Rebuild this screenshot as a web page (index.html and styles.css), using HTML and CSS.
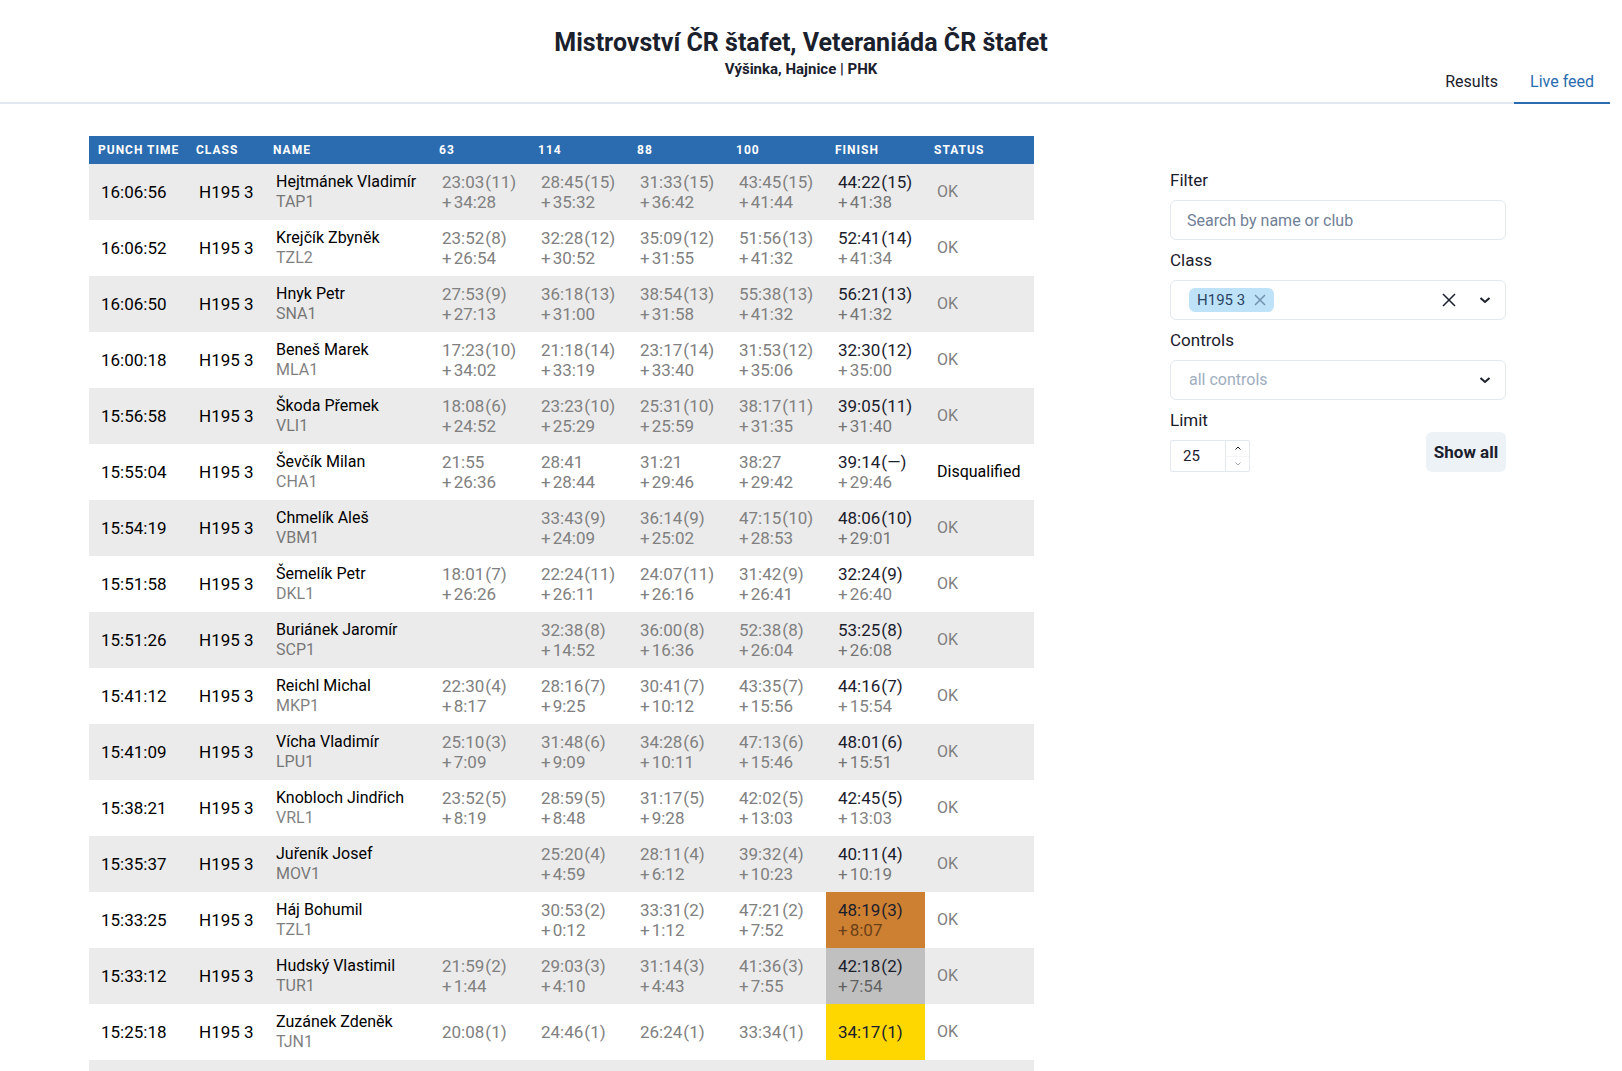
FILE: index.html
```html
<!DOCTYPE html>
<html lang="cs">
<head>
<meta charset="utf-8">
<meta name="viewport" content="width=device-width, initial-scale=1">
<title>Mistrovství ČR štafet, Veteraniáda ČR štafet</title>
<link rel="stylesheet" href="styles.css">
</head>
<body>
<header class="header">
  <h1 class="title">Mistrovství ČR štafet, Veteraniáda ČR štafet</h1>
  <p class="subtitle">Výšinka, Hajnice | PHK</p>
  <nav class="tabs">
    <a class="tab" href="#results">Results</a>
    <a class="tab tab-active" href="#live" aria-current="page">Live feed</a>
  </nav>
</header>
<main class="main">
  <table class="feed">
    <colgroup><col class="c-time"><col class="c-class"><col class="c-name"><col class="c-split"><col class="c-split"><col class="c-split"><col class="c-split"><col class="c-split"><col class="c-status"></colgroup>
    <thead>
      <tr><th>Punch time</th><th>Class</th><th>Name</th><th>63</th><th>114</th><th>88</th><th>100</th><th>Finish</th><th>Status</th></tr>
    </thead>
    <tbody>
      <tr><td>16:06:56</td><td>H195 3</td><td class="n">Hejtmánek Vladimír<small>TAP1</small></td><td class="s">23:03<b>(11)</b><small><i>+</i>34:28</small></td><td class="s">28:45<b>(15)</b><small><i>+</i>35:32</small></td><td class="s">31:33<b>(15)</b><small><i>+</i>36:42</small></td><td class="s">43:45<b>(15)</b><small><i>+</i>41:44</small></td><td class="f">44:22<b>(15)</b><small><i>+</i>41:38</small></td><td class="n s">OK</td></tr>
      <tr><td>16:06:52</td><td>H195 3</td><td class="n">Krejčík Zbyněk<small>TZL2</small></td><td class="s">23:52<b>(8)</b><small><i>+</i>26:54</small></td><td class="s">32:28<b>(12)</b><small><i>+</i>30:52</small></td><td class="s">35:09<b>(12)</b><small><i>+</i>31:55</small></td><td class="s">51:56<b>(13)</b><small><i>+</i>41:32</small></td><td class="f">52:41<b>(14)</b><small><i>+</i>41:34</small></td><td class="n s">OK</td></tr>
      <tr><td>16:06:50</td><td>H195 3</td><td class="n">Hnyk Petr<small>SNA1</small></td><td class="s">27:53<b>(9)</b><small><i>+</i>27:13</small></td><td class="s">36:18<b>(13)</b><small><i>+</i>31:00</small></td><td class="s">38:54<b>(13)</b><small><i>+</i>31:58</small></td><td class="s">55:38<b>(13)</b><small><i>+</i>41:32</small></td><td class="f">56:21<b>(13)</b><small><i>+</i>41:32</small></td><td class="n s">OK</td></tr>
      <tr><td>16:00:18</td><td>H195 3</td><td class="n">Beneš Marek<small>MLA1</small></td><td class="s">17:23<b>(10)</b><small><i>+</i>34:02</small></td><td class="s">21:18<b>(14)</b><small><i>+</i>33:19</small></td><td class="s">23:17<b>(14)</b><small><i>+</i>33:40</small></td><td class="s">31:53<b>(12)</b><small><i>+</i>35:06</small></td><td class="f">32:30<b>(12)</b><small><i>+</i>35:00</small></td><td class="n s">OK</td></tr>
      <tr><td>15:56:58</td><td>H195 3</td><td class="n">Škoda Přemek<small>VLI1</small></td><td class="s">18:08<b>(6)</b><small><i>+</i>24:52</small></td><td class="s">23:23<b>(10)</b><small><i>+</i>25:29</small></td><td class="s">25:31<b>(10)</b><small><i>+</i>25:59</small></td><td class="s">38:17<b>(11)</b><small><i>+</i>31:35</small></td><td class="f">39:05<b>(11)</b><small><i>+</i>31:40</small></td><td class="n s">OK</td></tr>
      <tr><td>15:55:04</td><td>H195 3</td><td class="n">Ševčík Milan<small>CHA1</small></td><td class="s">21:55<small><i>+</i>26:36</small></td><td class="s">28:41<small><i>+</i>28:44</small></td><td class="s">31:21<small><i>+</i>29:46</small></td><td class="s">38:27<small><i>+</i>29:42</small></td><td class="f">39:14<b>(—)</b><small><i>+</i>29:46</small></td><td class="n">Disqualified</td></tr>
      <tr><td>15:54:19</td><td>H195 3</td><td class="n">Chmelík Aleš<small>VBM1</small></td><td></td><td class="s">33:43<b>(9)</b><small><i>+</i>24:09</small></td><td class="s">36:14<b>(9)</b><small><i>+</i>25:02</small></td><td class="s">47:15<b>(10)</b><small><i>+</i>28:53</small></td><td class="f">48:06<b>(10)</b><small><i>+</i>29:01</small></td><td class="n s">OK</td></tr>
      <tr><td>15:51:58</td><td>H195 3</td><td class="n">Šemelík Petr<small>DKL1</small></td><td class="s">18:01<b>(7)</b><small><i>+</i>26:26</small></td><td class="s">22:24<b>(11)</b><small><i>+</i>26:11</small></td><td class="s">24:07<b>(11)</b><small><i>+</i>26:16</small></td><td class="s">31:42<b>(9)</b><small><i>+</i>26:41</small></td><td class="f">32:24<b>(9)</b><small><i>+</i>26:40</small></td><td class="n s">OK</td></tr>
      <tr><td>15:51:26</td><td>H195 3</td><td class="n">Buriánek Jaromír<small>SCP1</small></td><td></td><td class="s">32:38<b>(8)</b><small><i>+</i>14:52</small></td><td class="s">36:00<b>(8)</b><small><i>+</i>16:36</small></td><td class="s">52:38<b>(8)</b><small><i>+</i>26:04</small></td><td class="f">53:25<b>(8)</b><small><i>+</i>26:08</small></td><td class="n s">OK</td></tr>
      <tr><td>15:41:12</td><td>H195 3</td><td class="n">Reichl Michal<small>MKP1</small></td><td class="s">22:30<b>(4)</b><small><i>+</i>8:17</small></td><td class="s">28:16<b>(7)</b><small><i>+</i>9:25</small></td><td class="s">30:41<b>(7)</b><small><i>+</i>10:12</small></td><td class="s">43:35<b>(7)</b><small><i>+</i>15:56</small></td><td class="f">44:16<b>(7)</b><small><i>+</i>15:54</small></td><td class="n s">OK</td></tr>
      <tr><td>15:41:09</td><td>H195 3</td><td class="n">Vícha Vladimír<small>LPU1</small></td><td class="s">25:10<b>(3)</b><small><i>+</i>7:09</small></td><td class="s">31:48<b>(6)</b><small><i>+</i>9:09</small></td><td class="s">34:28<b>(6)</b><small><i>+</i>10:11</small></td><td class="s">47:13<b>(6)</b><small><i>+</i>15:46</small></td><td class="f">48:01<b>(6)</b><small><i>+</i>15:51</small></td><td class="n s">OK</td></tr>
      <tr><td>15:38:21</td><td>H195 3</td><td class="n">Knobloch Jindřich<small>VRL1</small></td><td class="s">23:52<b>(5)</b><small><i>+</i>8:19</small></td><td class="s">28:59<b>(5)</b><small><i>+</i>8:48</small></td><td class="s">31:17<b>(5)</b><small><i>+</i>9:28</small></td><td class="s">42:02<b>(5)</b><small><i>+</i>13:03</small></td><td class="f">42:45<b>(5)</b><small><i>+</i>13:03</small></td><td class="n s">OK</td></tr>
      <tr><td>15:35:37</td><td>H195 3</td><td class="n">Juřeník Josef<small>MOV1</small></td><td></td><td class="s">25:20<b>(4)</b><small><i>+</i>4:59</small></td><td class="s">28:11<b>(4)</b><small><i>+</i>6:12</small></td><td class="s">39:32<b>(4)</b><small><i>+</i>10:23</small></td><td class="f">40:11<b>(4)</b><small><i>+</i>10:19</small></td><td class="n s">OK</td></tr>
      <tr><td>15:33:25</td><td>H195 3</td><td class="n">Háj Bohumil<small>TZL1</small></td><td></td><td class="s">30:53<b>(2)</b><small><i>+</i>0:12</small></td><td class="s">33:31<b>(2)</b><small><i>+</i>1:12</small></td><td class="s">47:21<b>(2)</b><small><i>+</i>7:52</small></td><td class="f bronze">48:19<b>(3)</b><small><i>+</i>8:07</small></td><td class="n s">OK</td></tr>
      <tr><td>15:33:12</td><td>H195 3</td><td class="n">Hudský Vlastimil<small>TUR1</small></td><td class="s">21:59<b>(2)</b><small><i>+</i>1:44</small></td><td class="s">29:03<b>(3)</b><small><i>+</i>4:10</small></td><td class="s">31:14<b>(3)</b><small><i>+</i>4:43</small></td><td class="s">41:36<b>(3)</b><small><i>+</i>7:55</small></td><td class="f silver">42:18<b>(2)</b><small><i>+</i>7:54</small></td><td class="n s">OK</td></tr>
      <tr><td>15:25:18</td><td>H195 3</td><td class="n">Zuzánek Zdeněk<small>TJN1</small></td><td class="s">20:08<b>(1)</b></td><td class="s">24:46<b>(1)</b></td><td class="s">26:24<b>(1)</b></td><td class="s">33:34<b>(1)</b></td><td class="f gold">34:17<b>(1)</b></td><td class="n s">OK</td></tr>
      <tr><td></td><td></td><td></td><td></td><td></td><td></td><td></td><td></td><td></td></tr>
    </tbody>
  </table>
  <form class="filters">
    <div class="field">
      <label for="filter">Filter</label>
      <input class="box search" id="filter" type="text" placeholder="Search by name or club">
    </div>
    <div class="field">
      <label for="class">Class</label>
      <div class="box combo">
        <span class="chip">H195 3
          <button class="icon-btn chip-x" type="button" aria-label="Remove H195 3"><svg width="12" height="12" viewBox="0 0 12 12"><path d="M1 1l10 10M11 1l-10 10"/></svg></button>
        </span>
        <input class="combo-input" id="class" type="text">
        <button class="icon-btn clear" type="button" aria-label="Clear all"><svg width="14" height="14" viewBox="0 0 14 14"><path d="M1 1l12 12M13 1l-12 12"/></svg></button>
        <button class="icon-btn open" type="button" aria-label="Open list"><svg width="12" height="12" viewBox="0 0 12 12"><path d="M1.500 4l4.500 4 4.500-4"/></svg></button>
      </div>
    </div>
    <div class="field">
      <label for="controls">Controls</label>
      <div class="select-wrap">
        <select class="box controls" id="controls"><option>all controls</option></select>
        <svg class="select-arrow" width="12" height="12" viewBox="0 0 12 12"><path d="M1.500 4l4.500 4 4.500-4"/></svg>
      </div>
    </div>
    <div class="limit-row">
      <div class="field">
        <label for="limit">Limit</label>
        <div class="stepper">
          <input class="limit" id="limit" type="number" value="25">
          <div class="steps">
            <button class="step" type="button" aria-label="Increase"><svg width="8" height="8" viewBox="0 0 8 8"><path d="M1.500 5.500l2.500-2.500 2.500 2.500"/></svg></button>
            <button class="step" type="button" aria-label="Decrease" disabled><svg width="8" height="8" viewBox="0 0 8 8"><path d="M1.500 2.500l2.500 2.500 2.500-2.500"/></svg></button>
          </div>
        </div>
      </div>
      <button class="show-all" type="button">Show all</button>
    </div>
  </form>
</main>
</body>
</html>
```
FILE: styles.css
```css
*, *::before, *::after { box-sizing: border-box; }

body {
  margin: 0;
  padding-right: 12px;
  background: #fff;
  color: #1a202c;
  font: 16px/24px Roboto, sans-serif;
}

button, input, select {
  margin: 0;
  padding: 0;
  border: 0;
  background: none;
  color: inherit;
  font: inherit;
}

svg {
  display: block;
  fill: none;
  stroke: currentColor;
}

/* Header */
.header {
  padding-top: 27px;
  border-bottom: 2px solid #e2e8f0;
  text-align: center;
}
.title, .subtitle {
  margin: 0;
  padding-right: 8px;
  font-weight: 700;
}
.title { font-size: 25px; line-height: 32px; }
.subtitle { font-size: 15px; line-height: 20px; }
.tabs {
  display: flex;
  justify-content: flex-end;
  margin: -15px 0 -2px;
}
.tab {
  padding: 6px 16px 8px;
  border-bottom: 2px solid transparent;
  color: inherit;
  text-decoration: none;
}
.tab-active {
  border-color: #2b6cb0;
  color: #2b6cb0;
}

/* Page columns */
.main {
  display: grid;
  grid-template-columns: minmax(0, 945fr) minmax(0, 336fr);
  column-gap: 136px;
  align-items: start;
  padding: 32px 104px 0 89px;
}

/* Live feed table */
.feed {
  width: 100%;
  border-collapse: collapse;
  table-layout: fixed;
  font-size: 17px;
  line-height: 20px;
}
.c-time { width: 98px; }
.c-class { width: 77px; }
.c-name { width: 166px; }
.c-split { width: 99px; }
.feed th {
  height: 28px;
  padding: 0 9px;
  background: #2b6cb0;
  color: #fff;
  font-size: 12px;
  line-height: 16px;
  letter-spacing: 1px;
  text-align: left;
  text-transform: uppercase;
  white-space: nowrap;
}
.feed td {
  height: 56px;
  padding: 8px 0 8px 12px;
  color: #000;
  white-space: nowrap;
}
.feed tbody tr:nth-child(odd) { background: #ebebeb; }
.feed small {
  display: block;
  color: #000;
  font-size: inherit;
  opacity: 0.5;
}
.feed b { margin-left: 1px; font-weight: 400; }
.feed i { margin-right: 2px; font-style: normal; }
.feed .n { font-size: 16px; }
.feed .s { color: #808080; }
.feed .s small { color: inherit; opacity: 1; }
.feed .f { color: #1a202c; }
.feed .bronze { background: #cd7f32; }
.feed .silver { background: #c0c0c0; }
.feed .gold { background: #ffd700; }

/* Filter panel */
.filters {
  display: flex;
  flex-direction: column;
  gap: 8px;
  padding-top: 32px;
}
.field {
  display: flex;
  flex-direction: column;
  gap: 8px;
}
.field label { font-size: 17px; }
.box {
  width: 100%;
  height: 40px;
  border: 1px solid #e2e8f0;
  border-radius: 6px;
}
.search { padding: 0 16px; }
.search::placeholder { color: #718096; opacity: 1; }
.combo {
  display: flex;
  align-items: center;
  padding: 0 14px 0 18px;
}
.combo-input { flex: 1; min-width: 0; }
.chip {
  display: flex;
  align-items: center;
  gap: 9px;
  height: 24px;
  padding: 0 8px;
  border-radius: 6px;
  background: #bee3f8;
  color: #2a4365;
  font-size: 15px;
}
.icon-btn { display: block; }
.chip-x { opacity: 0.5; }
.chip-x path, .clear path { stroke-width: 1.5; }
.clear { margin-right: 23px; }
.open path, .select-arrow path { stroke-width: 2; }
.select-wrap { position: relative; }
.controls {
  padding: 0 18px;
  appearance: none;
  color: #a0aec0;
}
.select-arrow {
  position: absolute;
  top: 14px;
  right: 15px;
  pointer-events: none;
}
.limit-row {
  display: flex;
  align-items: flex-end;
  justify-content: space-between;
}
.stepper {
  display: flex;
  width: 80px;
  height: 32px;
  border: 1px solid #e2e8f0;
  border-radius: 2px;
}
.limit {
  flex: 1;
  min-width: 0;
  padding-left: 12px;
  font-size: 15px;
  appearance: textfield;
}
.steps {
  display: flex;
  flex-direction: column;
  width: 24px;
  border-left: 1px solid #e2e8f0;
}
.step {
  display: flex;
  flex: 1;
  align-items: center;
  justify-content: center;
}
.step + .step { border-top: 1px solid #e2e8f0; }
.step:disabled { opacity: 0.4; }
.show-all {
  width: 80px;
  height: 40px;
  border-radius: 6px;
  background: #edf2f7;
  font-size: 17px;
  font-weight: 700;
}
```
